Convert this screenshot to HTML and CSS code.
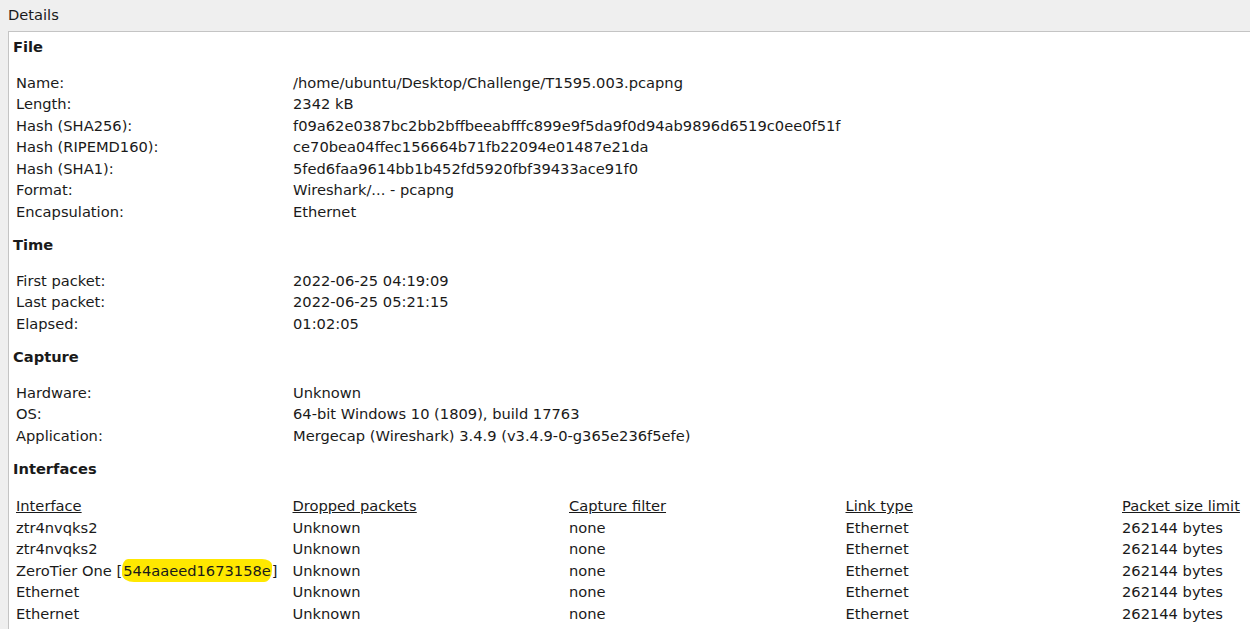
FILE: index.html
```html
<!DOCTYPE html>
<html lang="en">
<head>
  <meta charset="UTF-8">
  <title>Capture File Properties</title>
  <link rel="stylesheet" href="styles.css">
</head>
<body>

<div class="panel-title">Details</div>

<div class="details">
  <div class="section">
    <div class="heading">File</div>
    <div class="rows">
      <div class="row"><span class="key">Name:</span><span>/home/ubuntu/Desktop/Challenge/T1595.003.pcapng</span></div>
      <div class="row"><span class="key">Length:</span><span>2342 kB</span></div>
      <div class="row"><span class="key">Hash (SHA256):</span><span>f09a62e0387bc2bb2bffbeeabfffc899e9f5da9f0d94ab9896d6519c0ee0f51f</span></div>
      <div class="row"><span class="key">Hash (RIPEMD160):</span><span>ce70bea04ffec156664b71fb22094e01487e21da</span></div>
      <div class="row"><span class="key">Hash (SHA1):</span><span>5fed6faa9614bb1b452fd5920fbf39433ace91f0</span></div>
      <div class="row"><span class="key">Format:</span><span>Wireshark/... - pcapng</span></div>
      <div class="row"><span class="key">Encapsulation:</span><span>Ethernet</span></div>
    </div>
  </div>

  <div class="section">
    <div class="heading">Time</div>
    <div class="rows">
      <div class="row"><span class="key">First packet:</span><span>2022-06-25 04:19:09</span></div>
      <div class="row"><span class="key">Last packet:</span><span>2022-06-25 05:21:15</span></div>
      <div class="row"><span class="key">Elapsed:</span><span>01:02:05</span></div>
    </div>
  </div>

  <div class="section">
    <div class="heading">Capture</div>
    <div class="rows">
      <div class="row"><span class="key">Hardware:</span><span>Unknown</span></div>
      <div class="row"><span class="key">OS:</span><span>64-bit Windows 10 (1809), build 17763</span></div>
      <div class="row"><span class="key">Application:</span><span>Mergecap (Wireshark) 3.4.9 (v3.4.9-0-g365e236f5efe)</span></div>
    </div>
  </div>

  <div class="section">
    <div class="heading">Interfaces</div>
    <div class="rows iface">
      <div class="row head"><span>Interface</span><span>Dropped packets</span><span>Capture filter</span><span>Link type</span><span>Packet size limit</span></div>
      <div class="row"><span>ztr4nvqks2</span><span>Unknown</span><span>none</span><span>Ethernet</span><span>262144 bytes</span></div>
      <div class="row"><span>ztr4nvqks2</span><span>Unknown</span><span>none</span><span>Ethernet</span><span>262144 bytes</span></div>
      <div class="row"><span>ZeroTier One [<mark class="marker">544aaeed1673158e</mark>]</span><span>Unknown</span><span>none</span><span>Ethernet</span><span>262144 bytes</span></div>
      <div class="row"><span>Ethernet</span><span>Unknown</span><span>none</span><span>Ethernet</span><span>262144 bytes</span></div>
      <div class="row"><span>Ethernet</span><span>Unknown</span><span>none</span><span>Ethernet</span><span>262144 bytes</span></div>
    </div>
  </div>
</div>

</body>
</html>
```

FILE: styles.css
```css
html, body {
  margin: 0;
  padding: 0;
  height: 100%;
  overflow: hidden;
  background-color: #efefef;
  font-family: "DejaVu Sans", sans-serif;
  font-size: 14.67px;
  color: #1a1a1a;
}

.panel-title {
  padding: 6px 0 0 8px;
  height: 25px;
  line-height: 18px;
  box-sizing: border-box;
}

.details {
  margin: 6px 0 0 8px;
  width: 1300px;
  height: 700px;
  background-color: #fff;
  border: 1px solid #c4c4c4;
  padding: 4px 0 0 4px;
  box-sizing: border-box;
}

.section {
  margin-bottom: 12px;
}

.heading {
  font-weight: bold;
  line-height: 22px;
}

.rows {
  margin-top: 13.5px;
  padding-left: 3px;
}

.row {
  display: grid;
  grid-template-columns: 277px 1fr;
  line-height: 21.5px;
  white-space: nowrap;
}

.iface .row {
  grid-template-columns: repeat(5, 276.5px);
}

.iface .head span {
  text-decoration: underline;
}

.iface {
  margin-top: 15px;
}

.marker {
  background-color: #ffe800;
  color: inherit;
  padding: 3px 1px;
  margin: 0;
  border-radius: 6px 10px 8px 12px / 10px 6px 12px 8px;
}
```
